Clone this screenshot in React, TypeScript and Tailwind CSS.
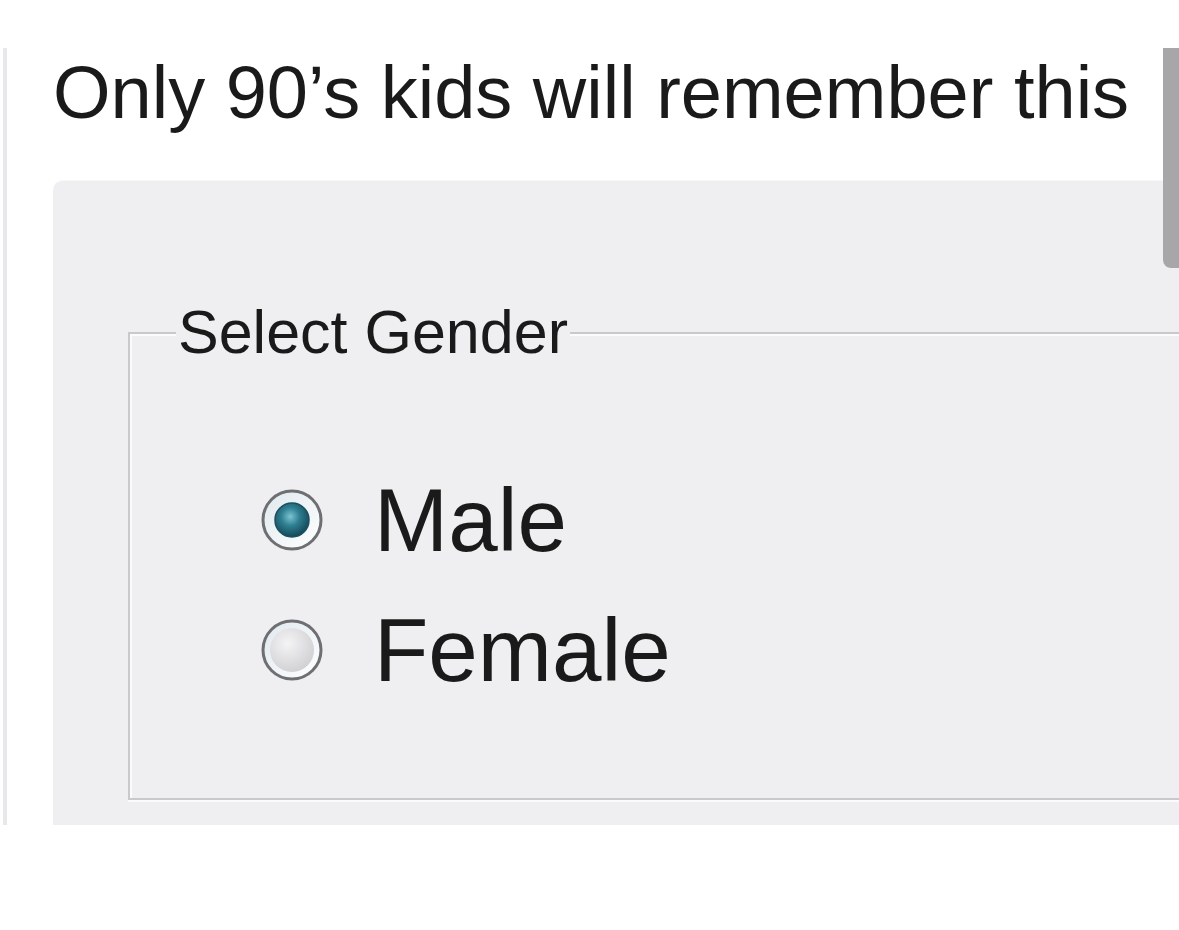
import React from 'react';

function Radio({ checked }: { checked: boolean }) {
    return (
        <svg width="64" height="64" viewBox="0 0 64 64" className="shrink-0">
            <defs>
                <radialGradient id="dot" cx="45%" cy="40%" r="60%">
                    <stop offset="0%" stopColor="#7cc4d2" />
                    <stop offset="45%" stopColor="#2f7f92" />
                    <stop offset="100%" stopColor="#14485a" />
                </radialGradient>
                <radialGradient id="well" cx="40%" cy="35%" r="70%">
                    <stop offset="0%" stopColor="#f4f4f5" />
                    <stop offset="100%" stopColor="#cfcfd2" />
                </radialGradient>
                <linearGradient id="ring" x1="0" y1="0" x2="1" y2="1">
                    <stop offset="0%" stopColor="#dfe9ee" />
                    <stop offset="100%" stopColor="#ffffff" />
                </linearGradient>
            </defs>
            <circle cx="32" cy="32" r="29" fill="url(#ring)" stroke="#6f6f73" strokeWidth="3" />
            {checked ? (
                <circle cx="32" cy="32" r="17" fill="url(#dot)" stroke="#1d4f5e" strokeWidth="1.5" />
            ) : (
                <circle cx="32" cy="32" r="22" fill="url(#well)" />
            )}
        </svg>
    );
}

export default function App() {
    return (
        <div className="relative h-[930px] w-full overflow-hidden bg-white font-['Liberation_Sans',Arial,sans-serif] text-[#1a1a1a]">
            <div className="flex h-[825px]">
                {/* thin left page edge */}
                <div className="ml-[3px] mt-[48px] w-[4px] shrink-0 bg-[#e8e8ea]" />

                <div className="flex min-w-0 flex-1 flex-col pl-[46px]">
                    <h1 className="mt-[56px] h-[124px] whitespace-nowrap text-[74px] leading-none font-normal">
                        Only 90’s kids will remember this
                    </h1>

                    <div className="flex-1 overflow-hidden rounded-tl-[10px] border-t border-[#f7f7f8] bg-[#efeff1] pl-[75px] pt-[121px]">
                        <fieldset className="h-[498px] w-[1100px] border-2 border-[#c9c9cd] shadow-[inset_2px_2px_0_#fbfbfc,0_2px_0_#fbfbfc] px-0">
                            <legend className="ml-[46px] bg-[#efeff1] px-[2px] text-[61px] leading-none">Select Gender</legend>
                            <div className="flex flex-col pl-[130px] pt-[92px]">
                                <label className="flex h-[130px] items-center gap-[50px]">
                                    <Radio checked />
                                    <span className="text-[89px] leading-none">Male</span>
                                </label>
                                <label className="flex h-[130px] items-center gap-[50px]">
                                    <Radio checked={false} />
                                    <span className="text-[89px] leading-none">Female</span>
                                </label>
                            </div>
                        </fieldset>
                    </div>
                </div>
            </div>

            {/* scrollbar thumb */}
            <div className="absolute right-0 top-[48px] h-[220px] w-[16px] rounded-bl-[8px] bg-[#a7a7a9]" />
        </div>
    );
}
